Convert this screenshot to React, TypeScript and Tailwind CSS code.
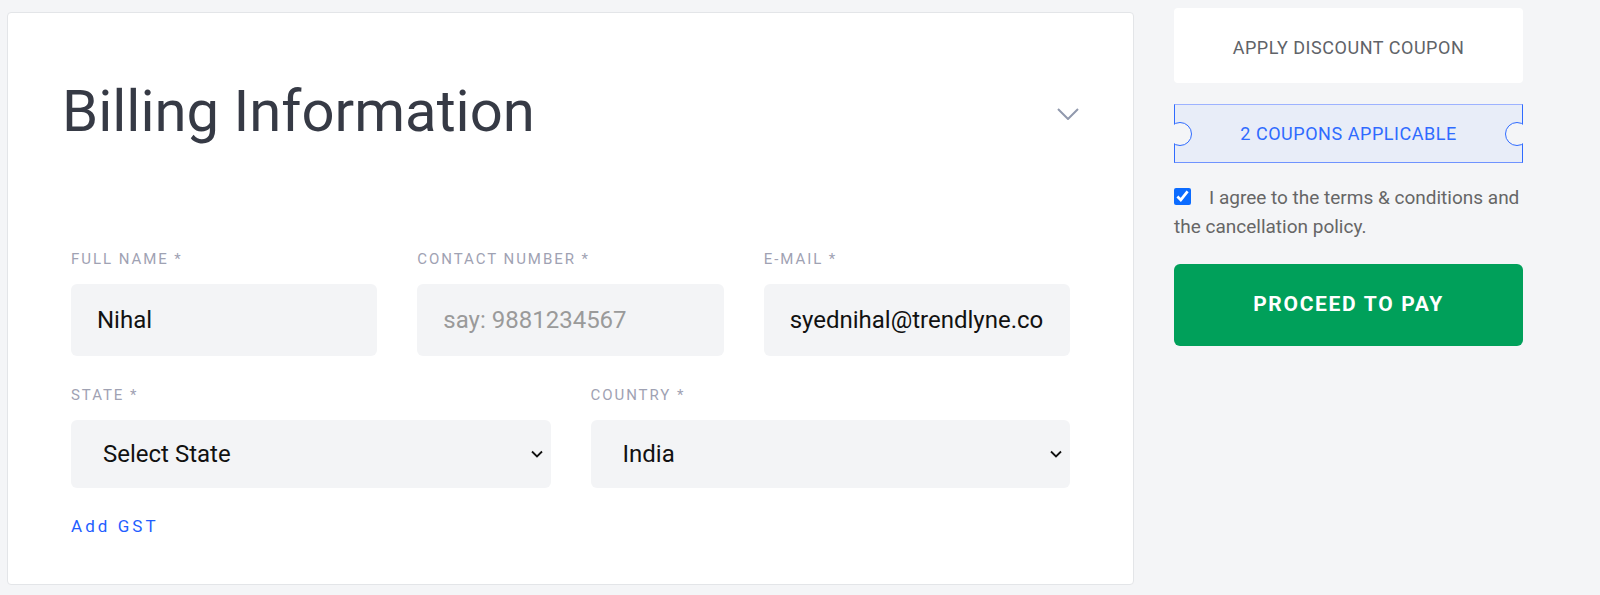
import { useState } from "react";

const labelClass = "block text-[15px] leading-5 tracking-[0.13em] text-[#9fa2b3] uppercase mb-[15px]";
const fieldClass =
  "w-full rounded-md bg-[#f3f4f6] text-[24px] text-[#111] outline-none placeholder:text-[#9a9a9a]";

const SmallChevron = () => (
  <svg
    className="absolute right-[8px] top-1/2 -translate-y-1/2 pointer-events-none"
    width="12"
    height="8"
    viewBox="0 0 12 8"
    fill="none"
  >
    <path d="M1 1.5l5 5 5-5" stroke="#111" strokeWidth="1.8" />
  </svg>
);

const Select = ({ value, options }: { value: string; options: string[] }) => (
  <div className="relative">
    <select
      defaultValue={value}
      className={`${fieldClass} appearance-none h-[68px] pl-[32px] pr-10`}
    >
      {options.map((o) => (
        <option key={o}>{o}</option>
      ))}
    </select>
    <SmallChevron />
  </div>
);

// Notch of the coupon ticket: a clipped circle that cuts into the side
const Notch = ({ side }: { side: "left" | "right" }) => (
  <span
    className={`absolute top-1/2 -translate-y-1/2 w-[18px] h-[26px] overflow-hidden ${
      side === "left" ? "-left-px" : "-right-px"
    }`}
  >
    <span
      className={`absolute top-px w-6 h-6 rounded-full bg-[#f4f5f7] border border-[#2f6bff] ${
        side === "left" ? "-left-[6px]" : "-right-[6px]"
      }`}
    />
  </span>
);

const App = () => {
  const [agree, setAgree] = useState(true);

  return (
    <div className="min-h-screen bg-[#f4f5f7] font-['Roboto',sans-serif]">
      <div className="flex items-start gap-10 pl-[7px]">
        {/* Billing card */}
        <section className="w-[1127px] h-[573px] mt-3 bg-white rounded border border-[#e3e5e8]">
          <header className="flex items-center justify-between pl-[54px] pr-[54px] pt-[69px]">
            <h1 className="text-[58px] leading-[58px] text-[#363a45]">Billing Information</h1>
            <svg width="22" height="12" viewBox="0 0 22 12" fill="none" className="mt-[6px]">
              <path d="M1 1l10 10L21 1" stroke="#9199ad" strokeWidth="2" />
            </svg>
          </header>

          <div className="px-[63px] pt-[109px]">
            <div className="grid grid-cols-3 gap-10">
              <div>
                <label className={labelClass}>Full Name *</label>
                <input defaultValue="Nihal" className={`${fieldClass} h-[72px] pl-[26px]`} />
              </div>
              <div>
                <label className={labelClass}>Contact Number *</label>
                <input placeholder="say: 9881234567" className={`${fieldClass} h-[72px] pl-[26px]`} />
              </div>
              <div>
                <label className={labelClass}>E-mail *</label>
                <input
                  defaultValue="syednihal@trendlyne.com"
                  className={`${fieldClass} h-[72px] pl-[26px] pr-[26px]`}
                />
              </div>
            </div>

            <div className="grid grid-cols-2 gap-10 mt-[29px]">
              <div>
                <label className={`${labelClass} mb-[14px]`}>State *</label>
                <Select value="Select State" options={["Select State", "Karnataka", "Maharashtra"]} />
              </div>
              <div>
                <label className={`${labelClass} mb-[14px]`}>Country *</label>
                <Select value="India" options={["India"]} />
              </div>
            </div>

            <a className="inline-block mt-[28px] text-[17px] leading-5 tracking-[0.18em] text-[#1f5eff]">Add GST</a>
          </div>
        </section>

        {/* Right column */}
        <aside className="w-[349px] mt-2">
          <button className="w-full h-[75px] pt-[3px] bg-white rounded text-[18px] tracking-[0.03em] text-[#5f6368]">
            APPLY DISCOUNT COUPON
          </button>

          <div className="relative mt-[21px] h-[59px] flex items-center justify-center bg-[#e8edf8] border border-[#2f6bff] border-t-[#9db2ff] border-b-[#6f93ff] text-[18px] tracking-[0.03em] text-[#2f6bff]">
            <Notch side="left" />
            <Notch side="right" />
            2 COUPONS APPLICABLE
          </div>

          <label className="block mt-[20px] text-[19px] leading-[29px] text-[#666]">
            <input
              type="checkbox"
              checked={agree}
              onChange={() => setAgree(!agree)}
              className="w-[17px] h-[17px] mr-[18px] align-[-1px] accent-[#0b6bff]"
            />
            I agree to the terms &amp; conditions and the cancellation policy.
          </label>

          <button className="w-full h-[82px] mt-[23px] rounded-md bg-[#00a05a] text-white text-[21px] font-bold tracking-[0.08em]">
            PROCEED TO PAY
          </button>
        </aside>
      </div>
    </div>
  );
};

export default App;
